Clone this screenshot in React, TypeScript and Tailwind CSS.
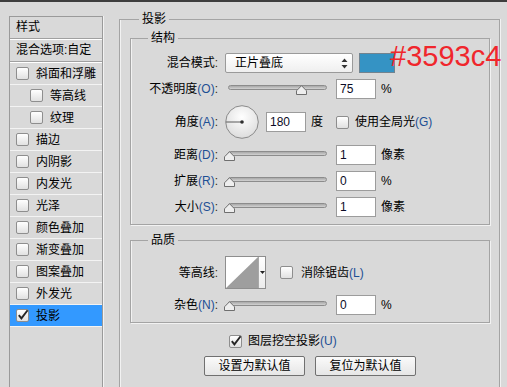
import React from 'react'

const layers = [
  { label: '斜面和浮雕' },
  { label: '等高线', sub: true },
  { label: '纹理', sub: true },
  { label: '描边' },
  { label: '内阴影' },
  { label: '内发光' },
  { label: '光泽' },
  { label: '颜色叠加' },
  { label: '渐变叠加' },
  { label: '图案叠加' },
  { label: '外发光' },
  { label: '投影', checked: true },
]

function Checkbox({ checked }: { checked?: boolean }) {
  return (
    <span className="relative block w-[13px] h-[13px] shrink-0 rounded-[2px] border border-[#8e8e8e] bg-linear-to-b from-[#ffffff] to-[#e1e1e1]">
      {checked && (
        <svg className="absolute -left-[1px] -top-[2px]" width="14" height="14" viewBox="0 0 14 14">
          <path d="M2.8 7.2 L5.4 10.4 L11.6 2.2" fill="none" stroke="#262626" strokeWidth="1.9" />
        </svg>
      )}
    </span>
  )
}

function Label({ text, hot }: { text: string; hot?: string }) {
  return (
    <span className="w-[87px] shrink-0 text-right whitespace-nowrap">
      {text}
      {hot && <span className="text-[#1d4f94]">({hot})</span>}
      <span className="text-[#3a2a10]">:</span>
    </span>
  )
}

function Slider({ value }: { value: number }) {
  return (
    <div className="relative ml-[6px] w-[107px] h-[20px] shrink-0">
      <div className="absolute left-[4px] right-[4px] top-[6px] h-[5px] rounded-full border border-[#8c8c8c] bg-linear-to-b from-[#a9a9a9] to-[#d2d2d2]" />
      <svg className="absolute top-[6px]" style={{ left: value * 96 }} width="11" height="10" viewBox="0 0 11 10">
        <path d="M0.5 9.5 V5.8 L5.5 0.7 L10.5 5.8 V9.5 Z" fill="#eeeeee" stroke="#6f6f6f" />
      </svg>
    </div>
  )
}

function NumBox({ value }: { value: string }) {
  return (
    <div className="w-[40px] h-[20px] shrink-0 bg-white border border-[#9c9c9c] pl-[3px] leading-[18px] text-[#0b0b26]">
      {value}
    </div>
  )
}

function SliderRow({ label, hot, value, num, unit }: { label: string; hot: string; value: number; num: string; unit: string }) {
  return (
    <div className="mt-[6px] h-[20px] flex items-center">
      <Label text={label} hot={hot} />
      <Slider value={value} />
      <div className="ml-[5px]">
        <NumBox value={num} />
      </div>
      <span className="ml-[5px]">{unit}</span>
    </div>
  )
}

export default function App() {
  return (
    <div className="relative w-[507px] h-[387px] overflow-hidden bg-[#d9d9d9] border-t-2 border-[#3d3d3d] flex items-start text-[12px] text-black font-['Liberation_Sans','Noto_Sans_CJK_SC',sans-serif]">
      {/* style list */}
      <div className="ml-[9px] mt-[14px] w-[94px] h-[400px] shrink-0 border border-[#9a9a9a] shadow-[1px_0_0_#f2f2f2]">
        <div className="h-[22px] border-b border-[#a0a0a0] pl-[6px] leading-[20px]">样式</div>
        <div className="h-[23px] border-t border-b border-t-white border-b-[#a0a0a0] pl-[6px] leading-[20px]">混合选项:自定</div>
        <div className="border-t border-white">
          {layers.map((l) => (
            <div
              key={l.label}
              className={`h-[22px] flex items-center border-b border-[#f3f3f3] ${l.sub ? 'pl-[20px]' : 'pl-[6px]'} ${l.checked ? 'bg-[#3399ff]' : ''}`}
            >
              <Checkbox checked={l.checked} />
              <span className="ml-[7px] whitespace-nowrap">{l.label}</span>
            </div>
          ))}
        </div>
      </div>

      {/* drop shadow settings */}
      <fieldset className="ml-[16px] mt-[10px] w-[381px] h-[420px] shrink-0 border border-[#a4a4a4] shadow-[inset_1px_0_0_#f2f2f2,1px_0_0_#f2f2f2] pl-[10px] pr-[9px]">
        <legend className="ml-[9px] px-[3px] leading-[14px]">投影</legend>

        <fieldset className="mt-[5px] border border-[#a4a4a4] shadow-[inset_1px_0_0_#f2f2f2,1px_1px_0_#f2f2f2] pb-[7px]">
          <legend className="ml-[17px] px-[3px] leading-[14px]">结构</legend>

          <div className="mt-[8px] h-[20px] flex items-center">
            <Label text="混合模式" />
            <div className="ml-[7px] w-[128px] h-[20px] shrink-0 flex items-center justify-between rounded-[2px] border border-[#9a9a9a] bg-linear-to-b from-[#ffffff] to-[#efefef] pl-[9px] pr-[4px]">
              <span>正片叠底</span>
              <svg width="7" height="11" viewBox="0 0 7 11">
                <path d="M3.5 0.5 L6.5 4 H0.5 Z M3.5 10.5 L6.5 7 H0.5 Z" fill="#333" />
              </svg>
            </div>
            <div className="ml-[6px] w-[36px] h-[20px] shrink-0 bg-[#3593c4] border border-[#72838f]" />
          </div>

          <SliderRow label="不透明度" hot="O" value={0.75} num="75" unit="%" />

          <div className="mt-[6px] h-[34px] flex items-center">
            <Label text="角度" hot="A" />
            <svg className="ml-[7px] shrink-0" width="34" height="34" viewBox="0 0 34 34">
              <defs>
                <radialGradient id="dial" cx="0.5" cy="0.35" r="0.7">
                  <stop offset="0" stopColor="#ffffff" />
                  <stop offset="1" stopColor="#dadada" />
                </radialGradient>
              </defs>
              <circle cx="17" cy="17" r="16.3" fill="url(#dial)" stroke="#8a8a8a" />
              <line x1="1" y1="17" x2="17" y2="17" stroke="#5a5a5a" strokeWidth="1" />
              <circle cx="17" cy="17" r="1.8" fill="#2e2e2e" />
            </svg>
            <div className="ml-[7px]">
              <NumBox value="180" />
            </div>
            <span className="ml-[5px]">度</span>
            <div className="ml-[13px]">
              <Checkbox />
            </div>
            <span className="ml-[6px] whitespace-nowrap">
              使用全局光<span className="text-[#1d4f94]">(G)</span>
            </span>
          </div>

          <SliderRow label="距离" hot="D" value={0} num="1" unit="像素" />
          <SliderRow label="扩展" hot="R" value={0} num="0" unit="%" />
          <SliderRow label="大小" hot="S" value={0} num="1" unit="像素" />
        </fieldset>

        <fieldset className="mt-[8px] border border-[#a4a4a4] shadow-[inset_1px_0_0_#f2f2f2,1px_1px_0_#f2f2f2] pb-[7px]">
          <legend className="ml-[17px] px-[3px] leading-[14px]">品质</legend>

          <div className="mt-[9px] h-[33px] flex items-center">
            <Label text="等高线" />
            <div className="ml-[7px] w-[41px] h-[33px] shrink-0 flex border border-[#8e8e8e] bg-white">
              <svg width="32" height="31" viewBox="0 0 32 31" className="shrink-0">
                <path d="M0 31 L32 0 V31 Z" fill="#9e9e9e" />
              </svg>
              <div className="flex-1 flex items-center justify-center border-l border-[#a8a8a8] bg-linear-to-b from-[#ffffff] to-[#ececec]">
                <svg width="5" height="3" viewBox="0 0 5 3">
                  <path d="M0 0 H5 L2.5 3 Z" fill="#222" />
                </svg>
              </div>
            </div>
            <div className="ml-[14px]">
              <Checkbox />
            </div>
            <span className="ml-[8px] whitespace-nowrap">
              消除锯齿<span className="text-[#1d4f94]">(L)</span>
            </span>
          </div>

          <SliderRow label="杂色" hot="N" value={0} num="0" unit="%" />
        </fieldset>

        <div className="mt-[9px] pl-[99px] flex items-center">
          <Checkbox checked />
          <span className="ml-[6px] whitespace-nowrap">
            图层挖空投影<span className="text-[#1d4f94]">(U)</span>
          </span>
        </div>

        <div className="mt-[6px] flex justify-center gap-[10px]">
          <button className="w-[101px] h-[20px] rounded-[2px] border border-[#707070] bg-linear-to-b from-[#fafafa] to-[#e6e6e6] leading-[18px]">设置为默认值</button>
          <button className="w-[101px] h-[20px] rounded-[2px] border border-[#707070] bg-linear-to-b from-[#fafafa] to-[#e6e6e6] leading-[18px]">复位为默认值</button>
        </div>
      </fieldset>

      <div className="absolute left-[390px] top-[40px] text-[29px] leading-none text-[#f0262c] font-['Liberation_Sans',sans-serif]">#3593c4</div>
    </div>
  )
}
